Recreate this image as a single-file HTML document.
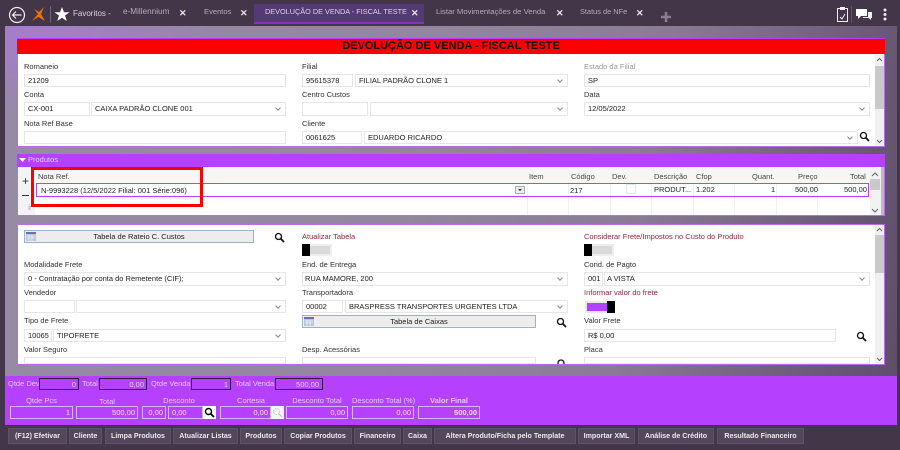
<!DOCTYPE html>
<html><head><meta charset="utf-8"><style>
html,body{margin:0;padding:0;width:900px;height:450px;overflow:hidden;background:#433649}
#w{position:absolute;left:0;top:0;width:900px;height:450px;overflow:hidden;background:#433649;filter:blur(.35px);font:7.5px "Liberation Sans",sans-serif;color:#222}
#w div,#w span,#w svg{position:absolute;white-space:nowrap}
.l{color:#303030;line-height:10px;height:10px}
.r{color:#8d2a3c}
.i{background:#fff;border:1px solid #e6e6e6;box-sizing:border-box;line-height:11px;padding-left:3px;color:#222;overflow:hidden}
.a::after{content:"";position:absolute;right:5px;top:3px;width:3px;height:3px;border-right:1px solid #888;border-bottom:1px solid #888;transform:rotate(45deg)}
.t{color:#b5aabb;font-size:7.600px;line-height:10px;top:7px}
.x{color:#e8e4ea;font-size:9px;font-weight:bold;line-height:10px;top:8px}
.b{top:428px;height:16px;background:#54475b;border:1px solid #5e5264;box-sizing:border-box;color:#ece8ee;font-weight:bold;font-size:7.100px;text-align:center;line-height:14px}
.d{border:1px solid #2b1a3f;box-sizing:border-box;top:378px;height:12px;color:#e6d2ff;text-align:right;padding-right:2px;line-height:11px}
.q{color:#e3c8ff;top:379px;line-height:10px}
.p{border:1px solid #d9b4ff;box-sizing:border-box;top:406px;height:13px;color:#f3e6ff;text-align:right;padding-right:2px;line-height:11px}
.h{color:#e3c8ff;top:396px;line-height:10px;text-align:center}
.g{top:172px;color:#444;line-height:10px}
.v{top:183px;width:1px;height:32px;background:#f0f0f0}
.c{top:186px;color:#222;line-height:10px}
</style></head><body><div id="w">

<div style="left:5px;top:26px;width:892px;height:350px;background:radial-gradient(ellipse 220px 90px at 0 0,#a77cd0 0,rgba(167,124,208,0) 100%),linear-gradient(100deg,#968aa6 0,#94869f 45%,#8a7a96 70%,#5f4e6b 100%)"></div>

<!-- top bar -->
<svg style="left:0;top:0" width="110" height="26" viewBox="0 0 110 26">
<circle cx="17" cy="15" r="7.5" fill="none" stroke="#eee" stroke-width="1.2"/>
<path d="M21.5 15H13M16 11.5L12.5 15L16 18.500" fill="none" stroke="#eee" stroke-width="1.200"/>
<path d="M32 21L38 14L34 9L39 12L44 7L41 14L45 21L38.500 17Z" fill="#e8700f"/>
<rect x="50" y="6" width="1" height="17" fill="#6f6474"/>
<path d="M62 7L64 12.300H69.500L65 15.500L66.800 21L62 17.700L57.200 21L59 15.500L54.500 12.300H60Z" fill="#fff"/>
</svg>
<span style="left:73px;top:9px;color:#d8d2dc;font-size:8px;line-height:10px">Favoritos -</span>
<span class="t" style="left:123px;font-size:8.200px">e-Millennium</span><span class="x" style="left:179px">✕</span>
<span class="t" style="left:204px">Eventos</span><span class="x" style="left:240px">✕</span>
<div style="left:254px;top:4px;width:170px;height:20px;background:#533a75;border-bottom:2px solid #8b2fc0;box-sizing:border-box"></div>
<span class="t" style="left:265px;color:#dcd4e4;font-size:7.300px">DEVOLUÇÃO DE VENDA - FISCAL TESTE</span><span class="x" style="left:411px">✕</span>
<span class="t" style="left:436px;font-size:7.700px">Listar Movimentações de Venda</span><span class="x" style="left:556px">✕</span>
<span class="t" style="left:580px;font-size:7.400px">Status de NFe</span><span class="x" style="left:636px">✕</span>
<svg style="left:660px;top:11px" width="12" height="12"><path d="M1 6H11M6 1V11" stroke="#8a7f90" stroke-width="2.500"/></svg>
<svg style="left:830px;top:4px" width="66" height="22" viewBox="0 0 66 22">
<rect x="7.500" y="4.500" width="10" height="13" fill="none" stroke="#eee"/>
<rect x="10" y="3" width="5" height="3" fill="#eee"/>
<path d="M10 13L12 15L15 10" fill="none" stroke="#eee"/>
<rect x="21" y="2" width="1" height="17" fill="#5f5465"/>
<path d="M26 5H37V12H31L28 15V12H26Z" fill="#fff"/>
<path d="M38 8H42V14H41V16L38.500 14H33V13H38Z" fill="#eee"/>
<circle cx="55" cy="6" r="1.500" fill="#eee"/><circle cx="55" cy="10.500" r="1.500" fill="#eee"/><circle cx="55" cy="15" r="1.500" fill="#eee"/>
</svg>

<!-- header red -->
<div style="left:17px;top:37.500px;width:868px;height:17px;background:#ff0000;border-top:1px solid #b341ff;box-sizing:border-box;color:#111;font-size:11px;font-weight:bold;text-align:center;line-height:15px">DEVOLUÇÃO DE VENDA - FISCAL TESTE</div>

<!-- panel 1 -->
<div style="left:17px;top:54px;width:868px;height:93px;background:#fff;border:1px solid #b56fe8;border-top:0;box-sizing:border-box"></div>
<span class="l" style="left:24px;top:62px">Romaneio</span>
<div class="i" style="left:24px;top:74px;width:262px;height:13px">21209</div>
<span class="l" style="left:24px;top:90px">Conta</span>
<div class="i" style="left:24px;top:102px;width:66px;height:14px">CX-001</div>
<div class="i a" style="left:91px;top:102px;width:195px;height:14px">CAIXA PADRÃO CLONE 001</div>
<span class="l" style="left:24px;top:119px">Nota Ref Base</span>
<div class="i" style="left:24px;top:131px;width:262px;height:13px"></div>
<span class="l" style="left:302px;top:62px">Filial</span>
<div class="i" style="left:302px;top:74px;width:51px;height:13px">95615378</div>
<div class="i a" style="left:355px;top:74px;width:213px;height:13px">FILIAL PADRÃO CLONE 1</div>
<span class="l" style="left:302px;top:90px">Centro Custos</span>
<div class="i" style="left:302px;top:102px;width:66px;height:14px"></div>
<div class="i a" style="left:370px;top:102px;width:198px;height:14px"></div>
<span class="l" style="left:302px;top:119px">Cliente</span>
<div class="i" style="left:302px;top:131px;width:60px;height:13px">0061625</div>
<div class="i a" style="left:364px;top:131px;width:494px;height:13px">EDUARDO RICARDO</div>
<svg style="left:859px;top:131px" width="11" height="11"><circle cx="4.500" cy="4.500" r="3" fill="none" stroke="#111" stroke-width="1.300"/><path d="M6.500 6.500L10 10" stroke="#111" stroke-width="1.800"/></svg>
<span class="l" style="left:584px;top:62px;color:#999">Estado da Filial</span>
<div class="i" style="left:584px;top:74px;width:286px;height:13px">SP</div>
<span class="l" style="left:584px;top:90px">Data</span>
<div class="i a" style="left:584px;top:102px;width:286px;height:14px">12/05/2022</div>
<div style="left:875px;top:55px;width:9px;height:91px;background:#f0f0f0"></div>
<div style="left:875px;top:66px;width:9px;height:43px;background:#c9c9c9"></div>
<svg style="left:875px;top:57px" width="9" height="6"><path d="M2 4L4.500 1.500L7 4" fill="none" stroke="#666"/></svg>
<svg style="left:875px;top:138px" width="9" height="6"><path d="M2 2L4.500 4.500L7 2" fill="none" stroke="#666"/></svg>

<!-- produtos -->
<div style="left:17px;top:154px;width:868px;height:13px;background:#b541ff;color:#e7caff;line-height:12px"><span style="left:11px;top:0">Produtos</span></div>
<svg style="left:19px;top:158px" width="7" height="5"><path d="M0 0H7L3.500 4Z" fill="#fff"/></svg>
<div style="left:17px;top:167px;width:868px;height:49px;background:#fff;border:1px solid #b56fe8;border-top:0;box-sizing:border-box"></div>
<div style="left:18px;top:167px;width:857px;height:16px;background:#f6f6f6"></div>
<div style="left:18px;top:167px;width:17px;height:48px;background:#f3f3f3"></div>
<div class="v" style="left:527px"></div><div class="v" style="left:568px"></div><div class="v" style="left:610px"></div><div class="v" style="left:651px"></div><div class="v" style="left:693px"></div><div class="v" style="left:734px"></div><div class="v" style="left:776px"></div><div class="v" style="left:817px"></div>
<span class="g" style="left:38px">Nota Ref.</span>
<span class="g" style="left:529px">Item</span><span class="g" style="left:571px">Código</span><span class="g" style="left:612px">Dev.</span><span class="g" style="left:654px">Descrição</span><span class="g" style="left:696px">Cfop</span>
<span class="g" style="left:752px">Quant.</span><span class="g" style="left:798px">Preço</span><span class="g" style="left:850px">Total</span>
<div style="left:36px;top:183px;width:833px;height:14px;border:1px solid #b541ff;box-sizing:border-box;background:#fff"></div>
<div class="v" style="left:527px;top:184px;height:12px"></div><div class="v" style="left:568px;top:184px;height:12px"></div><div class="v" style="left:610px;top:184px;height:12px"></div><div class="v" style="left:651px;top:184px;height:12px"></div><div class="v" style="left:693px;top:184px;height:12px"></div><div class="v" style="left:734px;top:184px;height:12px"></div><div class="v" style="left:776px;top:184px;height:12px"></div><div class="v" style="left:817px;top:184px;height:12px"></div>
<span class="c" style="left:41px">N-9993228 (12/5/2022 Filial: 001 Série:096)</span>
<div style="left:515px;top:186px;width:10px;height:8px;background:#eee;border:1px solid #aaa;box-sizing:border-box"></div>
<svg style="left:518px;top:189px" width="5" height="3"><path d="M0 0H4L2 2Z" fill="#222"/></svg>
<span class="c" style="left:570px;top:186px">217</span>
<div style="left:626px;top:184px;width:10px;height:10px;border:1px solid #e6e6e6;box-sizing:border-box"></div>
<span class="c" style="left:654px;top:185px">PRODUT...</span><span class="c" style="left:696px;top:185px">1.202</span>
<span class="c" style="left:771px;top:185px">1</span><span class="c" style="left:795px;top:185px">500,00</span><span class="c" style="left:844px;top:185px">500,00</span>
<span style="left:22px;top:175px;font-size:12px;line-height:12px;color:#333">+</span>
<div style="left:22px;top:195px;width:7px;height:1px;background:#333"></div>
<span style="left:27px;top:205px;font-size:6px;line-height:8px;color:#999">⇕</span>
<div style="left:870px;top:168px;width:14px;height:47px;background:#f2f2f2"></div>
<div style="left:870px;top:179px;width:10px;height:11px;background:#c9c9c9"></div>
<svg style="left:870px;top:172px" width="10" height="6"><path d="M2 4L5 1L8 4" fill="none" stroke="#666"/></svg>
<svg style="left:870px;top:207px" width="10" height="6"><path d="M2 2L5 5L8 2" fill="none" stroke="#666"/></svg>
<div style="left:881px;top:167px;width:3px;height:48px;background:#bcbcbc"></div>
<div style="left:31px;top:167px;width:172px;height:40px;border:3px solid #f00;box-sizing:border-box"></div>

<!-- panel 2 -->
<div style="left:17px;top:224px;width:868px;height:141px;background:#fff;border:1px solid #b56fe8;box-sizing:border-box;overflow:hidden"></div>
<div style="left:24px;top:230px;width:230px;height:13px;background:#ededed;border:1px solid #9fb2c4;box-sizing:border-box;text-align:center;line-height:12px">Tabela de Rateio C. Custos</div>
<svg style="left:26px;top:232px" width="10" height="9"><rect width="10" height="9" fill="#b7c6de"/><rect width="10" height="2" fill="#6a6fae"/><path d="M1 4H9M1 6H9M3 3V9M6 3V9" stroke="#fff" stroke-width=".6"/></svg>
<svg style="left:274px;top:232px" width="11" height="11"><circle cx="4.500" cy="4.500" r="3" fill="none" stroke="#111" stroke-width="1.300"/><path d="M6.500 6.500L10 10" stroke="#111" stroke-width="1.800"/></svg>
<span class="l r" style="left:302px;top:232px">Atualizar Tabela</span>
<div style="left:302px;top:244px;width:30px;height:12px;background:#eee"></div>
<div style="left:310px;top:246px;width:20px;height:8px;background:#d9d9d9"></div>
<div style="left:302px;top:244px;width:8px;height:12px;background:#000"></div>
<span class="l r" style="left:584px;top:232px">Considerar Frete/Impostos no Custo do Produto</span>
<div style="left:584px;top:244px;width:30px;height:12px;background:#eee"></div>
<div style="left:592px;top:246px;width:20px;height:8px;background:#d9d9d9"></div>
<div style="left:584px;top:244px;width:8px;height:12px;background:#000"></div>
<span class="l" style="left:24px;top:260px">Modalidade Frete</span>
<div class="i a" style="left:24px;top:272px;width:262px;height:13.500px">0 - Contratação por conta do Remetente (CIF);</div>
<span class="l" style="left:302px;top:260px">End. de Entrega</span>
<div class="i a" style="left:302px;top:272px;width:266px;height:13.500px;padding-left:2px">RUA MAMORE, 200</div>
<span class="l" style="left:584px;top:260px">Cond. de Pagto</span>
<div class="i" style="left:584px;top:272px;width:19px;height:13.500px">001</div>
<div class="i a" style="left:604px;top:272px;width:266px;height:13.500px;padding-left:2px">A VISTA</div>
<span class="l" style="left:24px;top:288px">Vendedor</span>
<div class="i" style="left:24px;top:300px;width:51px;height:13px"></div>
<div class="i a" style="left:76px;top:300px;width:210px;height:13px"></div>
<span class="l" style="left:302px;top:288px">Transportadora</span>
<div class="i" style="left:302px;top:300px;width:41px;height:13px">00002</div>
<div class="i a" style="left:345px;top:300px;width:223px;height:13px">BRASPRESS TRANSPORTES URGENTES LTDA</div>
<span class="l r" style="left:584px;top:288px">Informar valor do frete</span>
<div style="left:585px;top:301px;width:30px;height:12px;background:#e8e8e8"></div>
<div style="left:587px;top:303px;width:21px;height:8px;background:#b541ff"></div>
<div style="left:607px;top:301px;width:8px;height:12px;background:#000"></div>
<div style="left:302px;top:315px;width:234px;height:13px;background:#ededed;border:1px solid #9fb2c4;box-sizing:border-box;text-align:center;line-height:12px">Tabela de Caixas</div>
<svg style="left:304px;top:317px" width="10" height="9"><rect width="10" height="9" fill="#b7c6de"/><rect width="10" height="2" fill="#6a6fae"/><path d="M1 4H9M1 6H9M3 3V9M6 3V9" stroke="#fff" stroke-width=".6"/></svg>
<svg style="left:556px;top:317px" width="11" height="11"><circle cx="4.500" cy="4.500" r="3" fill="none" stroke="#111" stroke-width="1.300"/><path d="M6.500 6.500L10 10" stroke="#111" stroke-width="1.800"/></svg>
<span class="l" style="left:24px;top:316px">Tipo de Frete</span>
<div class="i" style="left:24px;top:329px;width:28px;height:12.500px">10065</div>
<div class="i a" style="left:53px;top:329px;width:233px;height:12.500px">TIPOFRETE</div>
<span class="l" style="left:584px;top:316px">Valor Frete</span>
<div class="i" style="left:584px;top:329px;width:252px;height:12.500px">R$ 0,00</div>
<svg style="left:856px;top:331px" width="11" height="11"><circle cx="4.500" cy="4.500" r="3" fill="none" stroke="#111" stroke-width="1.300"/><path d="M6.500 6.500L10 10" stroke="#111" stroke-width="1.800"/></svg>
<span class="l" style="left:24px;top:345px">Valor Seguro</span>
<span class="l" style="left:302px;top:345px">Desp. Acessórias</span>
<span class="l" style="left:584px;top:345px">Placa</span>
<div class="i" style="left:24px;top:357px;width:262px;height:7px"></div>
<div class="i" style="left:302px;top:357px;width:234px;height:7px"></div>
<div class="i" style="left:584px;top:357px;width:286px;height:7px"></div>
<div style="left:556px;top:358px;width:10px;height:6px;overflow:hidden"><svg style="left:0;top:0" width="11" height="11"><circle cx="5" cy="5" r="3" fill="none" stroke="#111" stroke-width="1.300"/></svg></div>
<div style="left:875px;top:225px;width:9px;height:139px;background:#f0f0f0"></div>
<div style="left:875px;top:235px;width:9px;height:38px;background:#c9c9c9"></div>
<svg style="left:875px;top:227px" width="9" height="6"><path d="M2 4L4.500 1.500L7 4" fill="none" stroke="#666"/></svg>
<svg style="left:875px;top:356px" width="9" height="6"><path d="M2 2L4.500 4.500L7 2" fill="none" stroke="#666"/></svg>
<div style="left:17px;top:363.500px;width:868px;height:1.500px;background:#b56fe8"></div>

<!-- bottom purple -->
<div style="left:5px;top:376px;width:892px;height:49px;background:#b541ff"></div>
<span class="q" style="left:8px">Qtde Dev</span><div class="d" style="left:39px;width:40px">0</div>
<span class="q" style="left:82px">Total</span><div class="d" style="left:99px;width:48px">0,00</div>
<span class="q" style="left:151px">Qtde Venda</span><div class="d" style="left:191px;width:40px">1</div>
<span class="q" style="left:235px">Total Venda</span><div class="d" style="left:275px;width:48px;padding-right:3px">500,00</div>
<span class="h" style="left:10px;width:63px">Qtde Pcs</span><div class="p" style="left:10px;width:63px">1</div>
<span class="h" style="left:76px;width:62px;top:397px">Total</span><div class="p" style="left:76px;width:62px">500,00</div>
<span class="h" style="left:142px;width:74px">Desconto</span><div class="p" style="left:142px;width:24px">0,00</div>
<div class="p" style="left:168px;width:35px;text-align:left;padding-left:3px">0,00</div>
<div style="left:203px;top:406px;width:13px;height:13px;background:#fff"></div>
<svg style="left:204px;top:407px" width="11" height="11"><circle cx="4.500" cy="4.500" r="3" fill="none" stroke="#000" stroke-width="1.400"/><path d="M6.500 6.500L10 10" stroke="#000" stroke-width="1.800"/></svg>
<span class="h" style="left:220px;width:62px">Cortesia</span><div class="p" style="left:220px;width:51px">0,00</div>
<div style="left:271px;top:406px;width:13px;height:13px;background:#f5f5f5"></div>
<svg style="left:272px;top:407px" width="11" height="11"><circle cx="4.500" cy="4.500" r="3" fill="none" stroke="#bbb" stroke-width="1" stroke-dasharray="1 1"/><path d="M6.500 6.500L10 10" stroke="#bbb"/></svg>
<span class="h" style="left:286px;width:62px">Desconto Total</span><div class="p" style="left:286px;width:62px">0,00</div>
<span class="h" style="left:352px;width:62px">Desconto Total (%)</span><div class="p" style="left:352px;width:62px">0,00</div>
<span class="h" style="left:418px;width:62px;font-weight:bold">Valor Final</span><div class="p" style="left:418px;width:62px;font-weight:bold">500,00</div>

<!-- buttons -->
<div class="b" style="left:8px;width:59px">(F12) Efetivar</div>
<div class="b" style="left:69px;width:33px">Cliente</div>
<div class="b" style="left:105px;width:66px">Limpa Produtos</div>
<div class="b" style="left:173px;width:65px">Atualizar Listas</div>
<div class="b" style="left:240px;width:42px">Produtos</div>
<div class="b" style="left:284px;width:68px">Copiar Produtos</div>
<div class="b" style="left:354px;width:47px">Financeiro</div>
<div class="b" style="left:403px;width:29px">Caixa</div>
<div class="b" style="left:434px;width:142px">Altera Produto/Ficha pelo Template</div>
<div class="b" style="left:578px;width:57px">Importar XML</div>
<div class="b" style="left:638px;width:76px">Análise de Crédito</div>
<div class="b" style="left:717px;width:87px">Resultado Financeiro</div>

</div></body></html>
